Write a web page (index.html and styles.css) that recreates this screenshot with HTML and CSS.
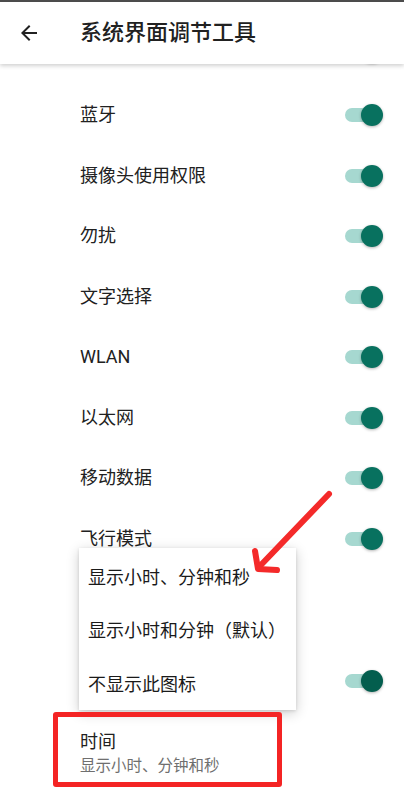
FILE: index.html
```html
<!DOCTYPE html>
<html lang="zh-CN">
<head>
    <meta charset="UTF-8">
    <meta name="viewport" content="width=device-width, initial-scale=1.0">
    <title>系统界面调节工具</title>
    <link rel="stylesheet" href="styles.css">
</head>
<body>
    <div class="statusbar"></div>
    <header class="appbar">
        <svg class="back" viewBox="0 0 24 24" width="24" height="24">
            <path d="M20 11H7.83l5.59-5.59L12 4l-8 8 8 8 1.41-1.41L7.83 13H20v-2z" fill="#212121"/>
        </svg>
        <h1>系统界面调节工具</h1>
    </header>

    <main class="list">
        <!-- row scrolled under the app bar -->
        <div class="row peek"><span class="label"></span><span class="switch"></span></div>
        <div class="row"><span class="label">蓝牙</span><span class="switch"></span></div>
        <div class="row"><span class="label">摄像头使用权限</span><span class="switch"></span></div>
        <div class="row"><span class="label">勿扰</span><span class="switch"></span></div>
        <div class="row"><span class="label">文字选择</span><span class="switch"></span></div>
        <div class="row"><span class="label">WLAN</span><span class="switch"></span></div>
        <div class="row"><span class="label">以太网</span><span class="switch"></span></div>
        <div class="row"><span class="label">移动数据</span><span class="switch"></span></div>
        <div class="row"><span class="label">飞行模式</span><span class="switch"></span></div>
        <!-- rows covered by the dropdown -->
        <div class="row two-line battery"></div>
        <div class="row"><span class="label"></span><span class="switch dark"></span></div>
        <div class="row two-line time">
            <div>
                <div class="label">时间</div>
                <div class="summary">显示小时、分钟和秒</div>
            </div>
        </div>
    </main>

    <!-- dropdown opened on the time row -->
    <ul class="popup">
        <li>显示小时、分钟和秒</li>
        <li>显示小时和分钟（默认）</li>
        <li>不显示此图标</li>
    </ul>

    <!-- annotation marks -->
    <div class="highlight"></div>
    <svg class="arrow" width="404" height="789" viewBox="0 0 404 789">
        <g stroke="#f42a2a" stroke-width="6" stroke-linecap="round" stroke-linejoin="round" fill="none">
            <path d="M329 494 L259 567"/>
            <path d="M255 551 L258 569 L277 570"/>
        </g>
    </svg>
</body>
</html>
```

FILE: styles.css
```css
body {
    margin: 0;
    width: 404px;
    height: 789px;
    overflow: hidden;
    background: #fff;
    font-family: Roboto, "Noto Sans CJK SC", sans-serif;
    color: #212121;
    position: relative;
}
.statusbar {
    height: 2px;
    background: #4d4d4d;
}
.appbar {
    position: relative;
    z-index: 2;
    height: 62px;
    display: flex;
    align-items: center;
    background: #fff;
    box-shadow: 0 2px 4px rgba(0, 0, 0, 0.18);
}
.back {
    margin-left: 17px;
    margin-right: 39px;
}
.appbar h1 {
    margin: 0;
    font-size: 22px;
    font-weight: 500;
    line-height: 28px;
}
.list {
    margin-top: -39.75px;
}
.row {
    height: 60.5px;
    display: flex;
    align-items: center;
    justify-content: space-between;
    padding: 0 21px 0 80px;
    box-sizing: border-box;
}
.label {
    font-size: 18px;
    line-height: 24px;
}
.switch {
    position: relative;
    width: 38px;
    height: 22px;
}
.switch::before {
    content: "";
    position: absolute;
    left: 0;
    top: 4px;
    width: 35px;
    height: 14px;
    border-radius: 7px;
    background: #a6d8d0;
}
.switch::after {
    content: "";
    position: absolute;
    right: 0;
    top: 0;
    width: 22px;
    height: 22px;
    border-radius: 50%;
    background: #08715f;
    box-shadow: 0 1px 3px rgba(0, 0, 0, 0.3);
}
.switch.dark::after {
    background: #035e4e;
}
.peek .switch {
    margin-bottom: 5px;
}
.two-line {
    align-items: flex-start;
}
.battery {
    height: 81.5px;
}
.time {
    height: 78px;
    padding-top: 19px;
}
.summary {
    font-size: 15.5px;
    line-height: 22px;
    margin-top: 1px;
    color: #6f6f6f;
}
.popup {
    position: absolute;
    left: 79px;
    top: 548px;
    width: 217px;
    margin: 0;
    padding: 1px 0 0;
    list-style: none;
    background: #fff;
    box-shadow: 0 3px 12px rgba(0, 0, 0, 0.2), 0 1px 3px rgba(0, 0, 0, 0.12);
    z-index: 3;
}
.popup li {
    height: 53.5px;
    display: flex;
    align-items: center;
    padding-left: 9px;
    font-size: 18px;
    color: #1a1a1a;
}
.highlight {
    position: absolute;
    left: 53px;
    top: 712px;
    width: 229px;
    height: 75px;
    box-sizing: border-box;
    border: 5px solid #f42424;
    border-radius: 3px;
    z-index: 4;
}
.arrow {
    position: absolute;
    left: 0;
    top: 0;
    z-index: 5;
    pointer-events: none;
}
```
